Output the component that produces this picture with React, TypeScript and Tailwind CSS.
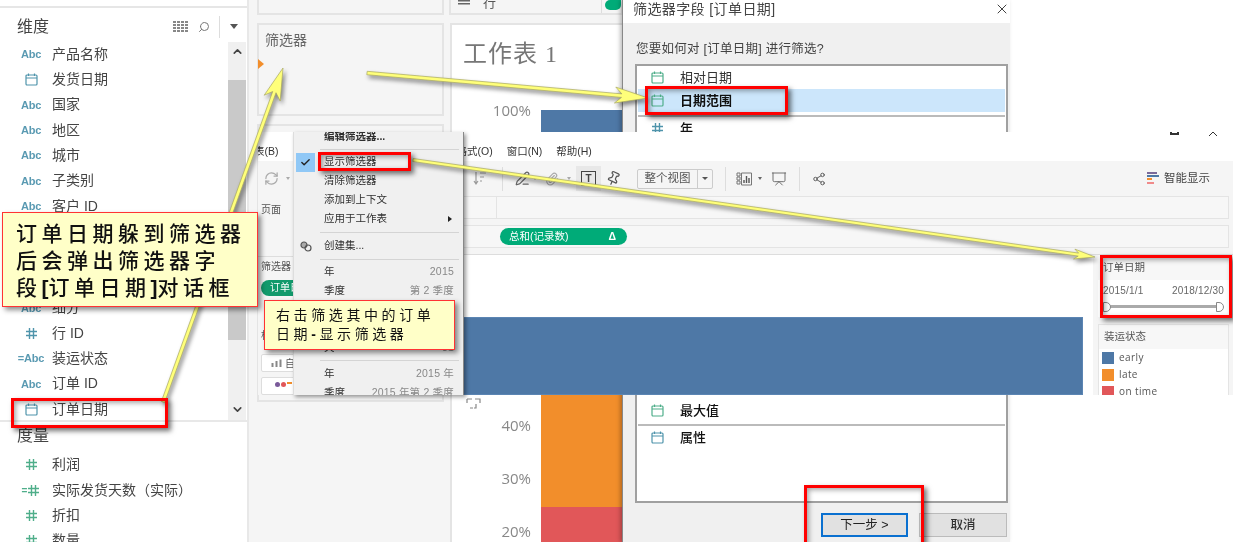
import { Check, ChevronDown, ChevronUp, Paperclip, PenLine, Pin, Presentation, RefreshCw, Search, Share2, X } from "lucide-react";

const Cal = ({ color = "#4f94ab", size = 13 }: { color?: string; size?: number }) => (
  <svg width={size} height={size} viewBox="0 0 13 13" fill="none" stroke={color} strokeWidth="1.2">
    <rect x="1" y="2" width="11" height="10" rx="1" />
    <path d="M1 5h11M3.5 0.5v2.5M9.5 0.5v2.5" />
  </svg>
);

const Hash = ({ color = "#4f94ab" }: { color?: string }) => (
  <svg width="13" height="13" viewBox="0 0 13 13" fill="none" stroke={color} strokeWidth="1.4">
    <path d="M4.5 1v11M8.5 1v11M1 4.5h11M1 8.5h11" />
  </svg>
);

const Abc = () => <span className="text-[11px] font-bold text-[#5a9ab2] tracking-[-0.2px]">Abc</span>;

const dims = [
  { icon: <Abc />, label: "产品名称" },
  { icon: <Cal />, label: "发货日期" },
  { icon: <Abc />, label: "国家" },
  { icon: <Abc />, label: "地区" },
  { icon: <Abc />, label: "城市" },
  { icon: <Abc />, label: "子类别" },
  { icon: <Abc />, label: "客户 ID" },
  { icon: <Abc />, label: "客户名称" },
  { icon: <Abc />, label: "省/自治区" },
  { icon: <Abc />, label: "类别" },
  { icon: <Abc />, label: "细分" },
  { icon: <Hash />, label: "行 ID" },
  { icon: <span className="text-[11px] font-bold text-[#5a9ab2] tracking-[-0.2px]">=Abc</span>, label: "装运状态" },
  { icon: <Abc />, label: "订单 ID" },
  { icon: <Cal />, label: "订单日期" },
];

const measures = [
  { icon: <Hash color="#4fae8a" />, label: "利润" },
  {
    icon: (
      <span className="flex items-center text-[10px] font-bold text-[#4fae8a]">
        =<Hash color="#4fae8a" />
      </span>
    ),
    label: "实际发货天数（实际）",
  },
  { icon: <Hash color="#4fae8a" />, label: "折扣" },
  { icon: <Hash color="#4fae8a" />, label: "数量" },
];

const FieldRow = ({ icon, label }: { icon: React.ReactNode; label: string }) => (
  <div className="flex items-center h-[25.36px] shrink-0">
    <div className="w-[52px] pr-[9px] flex justify-end items-center shrink-0">
      <span className="w-[24px] flex justify-center whitespace-nowrap">{icon}</span>
    </div>
    <span className="text-[14px] text-[#444] whitespace-nowrap">{label}</span>
  </div>
);

const Sidebar = () => (
  <aside className="w-[249px] h-[542px] shrink-0 bg-white border-r-2 border-[#e8e8e8] overflow-hidden flex flex-col">
    <div className="h-[8px] border-b-2 border-[#e6e6e6] shrink-0" />
    <div className="h-[34px] shrink-0 flex items-center pt-[3px] pl-[17px] pr-[9px]">
      <span className="text-[16px] text-[#444]">维度</span>
      <div className="ml-auto flex items-center text-[#777]">
        <svg width="15" height="12" viewBox="0 0 15 12" fill="#888">
          <path d="M0 0h3v2H0zM4 0h3v2H4zM8 0h3v2H8zM12 0h3v2h-3zM0 3h3v2H0zM4 3h3v2H4zM8 3h3v2H8zM12 3h3v2h-3zM0 6h3v2H0zM4 6h3v2H4zM8 6h3v2H8zM12 6h3v2h-3zM0 9h3v2H0zM4 9h3v2H4zM8 9h3v2H8zM12 9h3v2h-3z" />
        </svg>
        <Search size={12} className="ml-[10px] -scale-x-100" strokeWidth={2} />
        <div className="w-px h-[22px] bg-[#ddd] ml-[9px] mr-[10px]" />
        <div className="w-0 h-0 border-x-[4px] border-x-transparent border-t-[5px] border-t-[#555]" />
      </div>
    </div>
    <div className="flex h-[378px] shrink-0">
      <div className="flex-1 -mt-[0.5px] flex flex-col">
        {dims.map((d) => (
          <FieldRow key={d.label} icon={d.icon} label={d.label} />
        ))}
      </div>
      <div className="w-[18px] mr-[1px] bg-[#f0f0f0] flex flex-col items-center">
        <ChevronUp size={13} strokeWidth={3} className="mt-[3px] text-[#444]" />
        <div className="w-full h-[260px] mt-[22px] bg-[#c9c9c9]" />
        <ChevronDown size={13} strokeWidth={3} className="mt-auto mb-[4px] text-[#444]" />
      </div>
    </div>
    <div className="h-[2px] bg-[#e8e8e8] shrink-0" />
    <div className="h-[30px] shrink-0 pl-[17px] pb-[2px] flex items-center text-[16px] text-[#444]">度量</div>
    <div className="flex flex-col">
      {measures.map((m) => (
        <FieldRow key={m.label} icon={m.icon} label={m.label} />
      ))}
    </div>
  </aside>
);

const Worksheet = () => (
  <div className="w-[172px] h-[542px] shrink-0 flex flex-col">
    <div className="h-[15px] -mx-px border-2 border-t-0 border-[#e4e4e4] flex items-start pl-[7px] shrink-0 bg-[#f5f5f5] overflow-hidden">
      <svg width="12" height="6" viewBox="0 0 12 6" fill="#666">
        <path d="M0 0h12v1.5H0zM0 3h12v1.5H0z" />
      </svg>
      <span className="ml-[13px] text-[13px] leading-[6px] text-[#555]">行</span>
      <div className="ml-auto flex h-full">
        <div className="w-px bg-[#ddd] mr-[3px]" />
        <div className="w-[16px] h-[10px] rounded-b-full rounded-l-full bg-[#00ab78]" />
      </div>
    </div>
    <div className="h-[8px] shrink-0 bg-[#f5f5f5]" />
    <div className="flex-1 bg-white border-l-2 border-t-2 border-[#e4e4e4] flex flex-col overflow-hidden">
      <div className="h-[76px] pl-[11px] pt-[14px] text-[24px] leading-[30px] text-[#777] font-['Liberation_Serif','Noto_Sans_CJK_SC',serif] shrink-0 tracking-[1px]">
        工作表 1
      </div>
      <div className="flex flex-1">
        <div className="w-[79px] shrink-0 flex flex-col items-end text-[15px] text-[#888] font-['Open_Sans',sans-serif]">
          <div className="h-[18px] leading-[18px]">100%</div>
          <div className="h-[280px] pl-[14px] flex items-end self-start">
            <svg className="translate-y-[10px]" width="15" height="11" viewBox="0 0 15 11" fill="none" stroke="#888" strokeWidth="1.2">
              <path d="M1 1h5M9 1h5v4M1 1v4M4 10h3M10 6v4h-2" />
            </svg>
          </div>
          <div className="h-[53px] leading-[53px]">40%</div>
          <div className="h-[53px] leading-[53px]">30%</div>
          <div className="h-[53px] leading-[53px]">20%</div>
        </div>
        <div className="flex-1 flex flex-col mt-[9px] ml-[10px]">
          <div className="h-[285px] bg-[#4e78a6]" />
          <div className="h-[112px] bg-[#f28e2b]" />
          <div className="flex-1 bg-[#e15759]" />
        </div>
      </div>
    </div>
  </div>
);

const MiddleColumn = () => (
  <div className="w-[201px] h-[542px] shrink-0 bg-[#f5f5f5] pl-[8px] pr-[6px] flex flex-col gap-[8px]">
    <div className="h-[15px] shrink-0 border-2 border-t-0 border-[#e4e4e4]" />
    <div className="h-[93px] shrink-0 border-2 border-[#e4e4e4] pl-[6px] pt-[5px] text-[14px] text-[#666] relative">
      筛选器
      <div className="absolute -left-[1px] top-[34px] w-0 h-0 border-y-[5px] border-y-transparent border-l-[6px] border-l-[#f28e2b]" />
    </div>
    <div className="h-[278px] shrink-0 border-2 border-[#e4e4e4]" />
  </div>
);

const DialogRow = ({ icon, label, weight = "text-[#333]", selected, line }: { icon: React.ReactNode; label: string; weight?: string; selected?: boolean; line?: boolean }) => (
  <div className={`h-[23px] flex items-center shrink-0 pl-[13px] text-[13px] ${weight} ${selected ? "bg-[#cce6fb]" : ""} ${line ? "border-t-2 border-[#bbb] h-[25px]" : ""}`}>
    <span className="w-[29px] flex shrink-0">{icon}</span>
    {label}
  </div>
);

const FilterDialog = () => (
  <div className="absolute left-[622px] top-0 w-[388px] h-[542px] bg-[#f0f0f0] border-l border-[#888] shadow-[-2px_0_4px_rgba(0,0,0,0.25)] flex flex-col">
    <div className="h-[28px] shrink-0 bg-white flex items-center justify-between pl-[10px] -mt-[5px] text-[14px] text-[#444]">
      <span className="tracking-[0.4px]">筛选器字段 [订单日期]</span>
      <X size={16} strokeWidth={1.4} className="text-[#333]" />
    </div>
    <div className="h-[36px] shrink-0 pl-[13px] pt-[17px] text-[12.5px] leading-[18px] text-[#444] tracking-[0.25px]">
      您要如何对 [订单日期] 进行筛选?
    </div>
    <div className="h-[439px] mt-[5px] ml-[12px] w-[373px] border-2 border-[#a0a0a0] bg-white flex flex-col px-[1px]">
      <DialogRow icon={<Cal color="#4fae8a" />} label="相对日期" />
      <DialogRow icon={<Cal color="#4fae8a" />} label="日期范围" weight="font-bold text-[#111]" selected />
      <div className="h-[3px] shrink-0" />
      <DialogRow line icon={<Hash />} label="年" weight="font-medium text-[#111]" />
      <div className="h-[259px] shrink-0" />
      <DialogRow icon={<Cal color="#4fae8a" />} label="最大值" weight="font-medium text-[#111]" />
      <div className="h-[2px] shrink-0" />
      <DialogRow line icon={<Cal />} label="属性" weight="font-medium text-[#111]" />
    </div>
    <div className="flex justify-end gap-[11px] mt-[10px] mr-[3px]">
      <div className="w-[87px] h-[24px] bg-[#e1e1e1] border-2 border-[#0a70d0] flex items-center justify-center text-[12.5px] text-[#222]">下一步 &gt;</div>
      <div className="w-[88px] h-[24px] bg-[#e1e1e1] border border-[#bbb] flex items-center justify-center text-[12.5px] font-medium text-[#333]">取消</div>
    </div>
  </div>
);

const Sep = () => <div className="w-px h-[24px] bg-[#ddd] shrink-0" />;

const Caret = ({ className }: { className: string }) => (
  <div className={`w-0 h-0 border-x-[2px] border-x-transparent border-t-[3px] shrink-0 ${className}`} />
);

const ToolBar = () => (
  <div className="h-[35px] shrink-0 bg-[#f5f5f5] flex items-center text-[#777]">
    <RefreshCw size={15} className="ml-[6px] text-[#aaa] shrink-0" />
    <Caret className="ml-[7px] border-t-[#aaa]" />
    <svg className="ml-[183px] shrink-0" width="14" height="15" viewBox="0 0 14 15" fill="none" stroke="#999" strokeWidth="1.2">
      <path d="M3 1v12M1 10l2 3 2-3M7 2h6M7 6h4M7 10h2" />
    </svg>
    <div className="ml-[15px]"><Sep /></div>
    <PenLine size={15} className="ml-[12px] text-[#666] shrink-0" />
    <Caret className="ml-[3px] border-t-[#888]" />
    <Paperclip size={14} className="ml-[8px] text-[#aaa] shrink-0" />
    <Caret className="ml-[8px] border-t-[#aaa]" />
    <div className="ml-[5px] w-[25px] h-[25px] bg-[#e8e8e8] flex items-center justify-center shrink-0">
      <div className="w-[15px] h-[15px] border border-[#444] flex items-center justify-center text-[10px] leading-none text-[#444] font-bold">T</div>
    </div>
    <Pin size={15} className="ml-[5px] text-[#555] rotate-[25deg] shrink-0" />
    <div className="ml-[16px] w-[76px] h-[20px] border border-[#ccc] rounded-[2px] bg-[#f5f5f5] flex items-center text-[11.5px] text-[#555] shrink-0">
      <span className="flex-1 text-center">整个视图</span>
      <div className="w-[15px] h-full border-l border-[#ccc] flex items-center justify-center">
        <div className="w-0 h-0 border-x-[3px] border-x-transparent border-t-[3px] border-t-[#555]" />
      </div>
    </div>
    <div className="ml-[12px]"><Sep /></div>
    <svg className="ml-[10px] shrink-0" width="17" height="14" viewBox="0 0 17 14" fill="none" stroke="#777" strokeWidth="1">
      <path d="M1 1h3v3H1zM1 5h3v3H1zM1 9h3v3H1zM5.5 1h10v12h-10z" />
      <path d="M8 11V8M10.5 11V4M13 11V6" strokeWidth="1.4" stroke="#555" />
    </svg>
    <Caret className="ml-[5px] border-t-[#666]" />
    <Presentation size={16} strokeWidth={1.4} className="ml-[9px] text-[#666] shrink-0" />
    <div className="ml-[12px]"><Sep /></div>
    <Share2 size={14} strokeWidth={1.6} className="ml-[12px] text-[#555] shrink-0" />
    <div className="ml-auto mr-[23px] flex items-center gap-[5px] text-[11.5px] text-[#444]">
      <svg width="12" height="13" viewBox="0 0 12 13">
        <path d="M0 0h10v2H0z" fill="#7a6a9a" />
        <path d="M0 3h12v2H0z" fill="#4e78a6" />
        <path d="M0 6h5v2H0z" fill="#f28e2b" />
        <path d="M0 10h7v2H0z" fill="#f08a8a" />
      </svg>
      智能显示
    </div>
  </div>
);

const LeftStrip = () => (
  <div className="w-[205px] shrink-0 bg-[#f5f5f5] flex flex-col pl-[3px] text-[10px] text-[#555]">
    <div className="pt-[6px] h-[63px] border-b border-[#ddd] -ml-[3px] pl-[3px]">页面</div>
    <div className="pt-[1px] h-[22px] leading-[14px] mt-[2px]">筛选器</div>
    <div className="h-[16px] w-[60px] rounded-full bg-[#129a6c] text-white text-[10px] leading-[16px] pl-[9px]">订单日期</div>
    <div className="mt-[32px] h-[14px]">标记</div>
    <div className="mt-[12px] h-[18px] w-[60px] border border-[#ddd] rounded-[2px] bg-white flex items-center pl-[9px] gap-[2px] shrink-0">
      <svg width="12" height="9" viewBox="0 0 12 9" fill="none" stroke="#888">
        <path d="M1.5 4v4M5.5 2v6M9.5 0.5v7.5" strokeWidth="2" />
      </svg>
      自动
    </div>
    <div className="mt-[5px] h-[18px] w-[60px] border border-[#ddd] rounded-[2px] bg-white flex flex-wrap content-start pl-[13px] pt-[4px] gap-x-[1px] gap-y-[1px] shrink-0">
      <span className="w-[5px] h-[5px] rounded-full bg-[#7a5a9a]" />
      <span className="w-[5px] h-[5px] rounded-full bg-[#e15759]" />
      <span className="w-[5px] h-[2px] mr-[20px] bg-[#f28e2b]" />
    </div>
  </div>
);

const FilterCard = () => (
  <div className="h-[62px] shrink-0 bg-[#f7f7f7] text-[10px] text-[#666] flex flex-col">
    <div className="h-[25px] pl-[5px] flex items-center text-[10.5px] text-[#555]">订单日期</div>
    <div className="bg-white flex-1 px-[5px] pt-[3px] flex flex-col">
      <div className="flex justify-between tracking-[0.2px]">
        <span>2015/1/1</span>
        <span>2018/12/30</span>
      </div>
      <div className="mt-[7px] relative h-[3px] mx-[3px] bg-[#aaa]">
        <div className="absolute -left-[3px] -top-[3px] w-[8px] h-[10px] bg-white border border-[#888] rounded-r-full" />
        <div className="absolute -right-[3px] -top-[3px] w-[8px] h-[10px] bg-white border border-[#888] rounded-r-full" />
      </div>
    </div>
  </div>
);

const Legend = () => (
  <div className="mt-[7px] flex-1 bg-white border border-[#e4e4e4] text-[10px] text-[#555] flex flex-col">
    <div className="h-[24px] bg-[#f7f7f7] flex items-center pl-[5px] text-[10.5px]">装运状态</div>
    {[
      { c: "bg-[#4e78a6]", t: "early" },
      { c: "bg-[#f28e2b]", t: "late" },
      { c: "bg-[#e15759]", t: "on time" },
    ].map((l) => (
      <div key={l.t} className="h-[17px] flex items-center shrink-0 pl-[3px] gap-[5px] tracking-[0.4px] font-['Open_Sans',sans-serif]">
        <span className={`w-[12px] h-[12px] ${l.c}`} />
        {l.t}
      </div>
    ))}
  </div>
);

const WorkbookWindow = () => (
  <div className="absolute left-[258px] top-[132px] w-[975px] h-[263px] bg-white overflow-hidden flex flex-col">
    <div className="h-[29px] shrink-0 relative text-[10.5px] text-[#333] flex items-end pb-[1px]">
      <span className="-ml-[4px]">表(B)</span>
      <span className="ml-[178px]">格式(O)</span>
      <span className="ml-[14px]">窗口(N)</span>
      <span className="ml-[14px]">帮助(H)</span>
      <div className="absolute left-[912px] top-0 w-[9px] h-[3px] border-x-2 border-b-2 border-[#333]" />
      <svg className="absolute left-[950px] top-0" width="10" height="4" viewBox="0 0 10 4" fill="none" stroke="#333" strokeWidth="1">
        <path d="M1 4l4-4 4 4" />
      </svg>
    </div>
    <ToolBar />
    <div className="flex-1 flex min-h-0">
      <LeftStrip />
      <div className="flex-1 flex flex-col bg-[#f5f5f5] min-w-0">
        <div className="h-[23px] shrink-0 mr-[4px] bg-[#f7f7f7] border border-[#e4e4e4] border-l-0 flex">
          <div className="w-[34px] border-r border-[#e4e4e4]" />
        </div>
        <div className="h-[23px] mt-[6px] shrink-0 mr-[4px] bg-[#f7f7f7] border border-[#e4e4e4] border-l-0 flex items-center pl-[37px]">
          <div className="w-[127px] h-[17px] rounded-full bg-[#00ab78] text-white text-[10.5px] flex items-center pl-[9px] pr-[11px] justify-between">
            <span>总和(记录数)</span>
            <span className="font-bold">Δ</span>
          </div>
        </div>
        <div className="flex-1 flex mt-[6px] min-h-0">
          <div className="w-[630px] bg-white border-t border-[#ddd] shrink-0 pt-[62px] pr-[10px]">
            <div className="h-full bg-[#4e78a6] border border-[#5b85b3]" />
          </div>
          <div className="flex-1 pl-[5px] pr-[4px] flex flex-col border-t border-[#ddd] min-w-0">
            <FilterCard />
            <Legend />
          </div>
        </div>
      </div>
    </div>
  </div>
);

const MenuItem = ({ label, right, children, bold }: { label: string; right?: string; children?: React.ReactNode; bold?: boolean }) => (
  <div className={`h-[19px] shrink-0 flex items-center pl-[30px] pr-[9px] text-[10.5px] text-[#2f2f2f] ${bold ? "font-bold" : ""}`}>
    {label}
    {right && <span className="ml-auto text-[#888] tracking-[0.2px]">{right}</span>}
    {children}
  </div>
);

const MenuSep = ({ h }: { h: string }) => (
  <div className={`${h} shrink-0 flex items-center pl-[26px] pr-[4px]`}>
    <div className="h-px w-full bg-[#d4d4d4]" />
  </div>
);

const ContextMenu = () => (
  <div className="absolute left-[293px] top-[132px] w-[171px] h-[263px] bg-[#f0f0f0] border-l border-l-[#ddd] border-r border-r-[#888] shadow-[2px_2px_4px_rgba(0,0,0,0.4)] overflow-hidden">
    <div className="-mt-[4.5px] flex flex-col">
      <MenuItem label="编辑筛选器..." bold />
      <MenuSep h="h-[6px]" />
      <div className="relative">
        <MenuItem label="显示筛选器" />
        <div className="absolute left-[2px] top-0 w-[19px] h-[19px] bg-[#90c8f6] flex items-center justify-center">
          <Check size={11} strokeWidth={3} className="text-[#222]" />
        </div>
      </div>
      <MenuItem label="清除筛选器" />
      <MenuItem label="添加到上下文" />
      <MenuItem label="应用于工作表">
        <div className="ml-auto mr-[2px] w-0 h-0 border-y-[3px] border-y-transparent border-l-[4px] border-l-[#222]" />
      </MenuItem>
      <MenuSep h="h-[8px]" />
      <div className="relative">
        <MenuItem label="创建集..." />
        <svg className="absolute left-[6px] top-[4px]" width="12" height="11" viewBox="0 0 12 11" fill="none" stroke="#555" strokeWidth="1.2">
          <circle cx="4" cy="4" r="3" fill="#aaa" />
          <circle cx="8" cy="7" r="3" />
        </svg>
      </div>
      <MenuSep h="h-[7px]" />
      <MenuItem label="年" right="2015" />
      <MenuItem label="季度" right="第 2 季度" />
      <MenuItem label="月" right="5 月" />
      <MenuItem label="周" right="第 22 周" />
      <MenuItem label="天" right="31" />
      <MenuSep h="h-[6.5px]" />
      <MenuItem label="年" right="2015 年" />
      <MenuItem label="季度" right="2015 年第 2 季度" />
    </div>
  </div>
);

const RedBox = ({ className }: { className: string }) => (
  <div className={`absolute border-[3px] border-[#f00] shadow-[3px_3px_5px_rgba(0,0,0,0.55),inset_2px_2px_5px_rgba(0,0,0,0.35)] ${className}`} />
);

const arrowPoints = (x1: number, y1: number, x2: number, y2: number, w: number, head: number, hw: number) => {
  const len = Math.hypot(x2 - x1, y2 - y1);
  const ux = (x2 - x1) / len;
  const uy = (y2 - y1) / len;
  const nx = -uy;
  const ny = ux;
  const at = (d: number, s: number) => `${(x1 + ux * d + nx * s).toFixed(1)},${(y1 + uy * d + ny * s).toFixed(1)}`;
  return [
    at(0, w / 2),
    at(len - head * 0.8, w / 2),
    at(len - head, hw / 2),
    at(len, 0),
    at(len - head, -hw / 2),
    at(len - head * 0.8, -w / 2),
    at(0, -w / 2),
  ].join(" ");
};

const Arrows = () => (
  <svg className="absolute inset-0 pointer-events-none drop-shadow-[2px_3px_2px_rgba(0,0,0,0.45)]" width="1233" height="542">
    <g fill="#ffff7a" stroke="#a8a860" strokeWidth="0.7">
      <polygon points={arrowPoints(163, 402, 283, 68, 3.5, 32, 17)} />
      <polygon points={arrowPoints(367, 73, 648, 98, 3.5, 33, 16)} />
      <polygon points={arrowPoints(413, 160, 1095, 257, 3, 21, 10)} />
    </g>
  </svg>
);

const Callout = ({ className, children }: { className: string; children: React.ReactNode }) => (
  <div className={`absolute bg-[#ffffc8] border border-[#f33] shadow-[3px_3px_5px_rgba(0,0,0,0.45)] text-[#111] ${className}`}>{children}</div>
);

export default function App() {
  return (
    <div className="relative w-[1233px] h-[542px] overflow-hidden bg-white flex blur-[0.45px] font-['Liberation_Sans','Noto_Sans_CJK_SC',sans-serif]">
      <Sidebar />
      <MiddleColumn />
      <Worksheet />
      <FilterDialog />
      <WorkbookWindow />
      <ContextMenu />
      <Arrows />
      <RedBox className="left-[11px] top-[398px] w-[157px] h-[30px]" />
      <RedBox className="left-[645px] top-[86px] w-[143px] h-[29px]" />
      <RedBox className="left-[318px] top-[152px] w-[93px] h-[19px]" />
      <RedBox className="left-[804px] top-[485px] w-[120px] h-[70px]" />
      <RedBox className="left-[1100px] top-[255px] w-[132px] h-[63px]" />
      <Callout className="left-[2px] top-[212px] w-[256px] h-[95px] pl-[13px] pt-[7px] text-[21px] leading-[27px] tracking-[4.5px] font-medium whitespace-nowrap">
        <div>订单日期躲到筛选器</div>
        <div>后会弹出筛选器字</div>
        <div>段<b className="tracking-normal">[</b>订单日期<b className="tracking-normal">]</b>对话框</div>
      </Callout>
      <Callout className="left-[264px] top-[300px] w-[191px] h-[50px] pl-[11px] pt-[5px] text-[14px] leading-[19px] tracking-[3.6px] whitespace-nowrap">
        <div>右击筛选其中的订单</div>
        <div>日期<b>-</b>显示筛选器</div>
      </Callout>
    </div>
  );
}
